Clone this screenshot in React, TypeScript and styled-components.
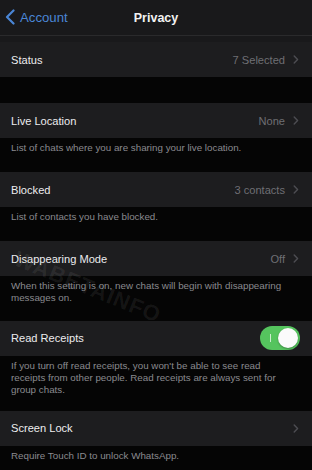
import React from "react"
import styled, { createGlobalStyle } from "styled-components"

const GlobalStyle = createGlobalStyle`
  html, body {
    margin: 0;
    padding: 0;
    background: #000;
  }
  body {
    font-family: "Liberation Sans", Arial, sans-serif;
    -webkit-font-smoothing: antialiased;
  }
`

const Screen = styled.div`
  position: relative;
  width: 312px;
  height: 470px;
  overflow: hidden;
  background: #050505;
  color: #e6e6e8;
`

const NavBar = styled.header`
  display: grid;
  grid-template-columns: 1fr auto 1fr;
  align-items: center;
  height: 35px;
  background: #19191b;
  border-bottom: 1px solid #2a2a2c;
  padding: 0 5px;
`

const BackButton = styled.div`
  display: flex;
  align-items: center;
  gap: 5px;
  color: #4a86d6;
  font-size: 13.2px;
  margin-top: -1px;
`

const Title = styled.h1`
  margin: 0;
  font-size: 12.5px;
  font-weight: 700;
  color: #f2f2f2;
`

const TopGap = styled.div`
  height: 6px;
  background: #19191b;
`

const Row = styled.div`
  display: flex;
  align-items: center;
  height: 35px;
  padding: 0 13px 0 11px;
  background: #1d1d1f;
`

const Label = styled.span`
  flex: 1;
  font-size: 11.1px;
  color: #ececee;
`

const Value = styled.span`
  font-size: 11.1px;
  color: #6f6f74;
  margin-right: 8px;
`

const Footer = styled.div<{ $lines?: number }>`
  padding: 4px 22px 0 11px;
  height: ${(p) => 30 + ((p.$lines ?? 1) - 1) * 10.5}px;
  font-size: 9.8px;
  line-height: 12px;
  color: #8a8a8f;
`

const SectionGap = styled.div`
  height: 26px;
`

const Toggle = styled.div`
  position: relative;
  width: 40px;
  height: 24px;
  border-radius: 12px;
  background: #55c45e;
  margin-right: -1px;

  &::before {
    content: "";
    position: absolute;
    left: 10px;
    top: 8px;
    width: 1px;
    height: 8px;
    background: rgba(255, 255, 255, 0.7);
  }

  &::after {
    content: "";
    position: absolute;
    right: 2px;
    top: 2px;
    width: 20px;
    height: 20px;
    border-radius: 50%;
    background: #fbfbfb;
    box-shadow: 0 1px 2px rgba(0, 0, 0, 0.3);
  }
`

const Watermark = styled.div`
  position: absolute;
  left: 20px;
  top: 246px;
  font-size: 22px;
  font-weight: 700;
  letter-spacing: 1px;
  color: rgba(255, 255, 255, 0.07);
  transform: rotate(22deg);
  transform-origin: left top;
  pointer-events: none;
`

const BackChevron = () => (
  <svg width="10" height="16" viewBox="0 0 10 16" fill="none">
    <path d="M8.5 1.5L2 8l6.5 6.5" stroke="#4a86d6" strokeWidth="2.2" strokeLinecap="round" strokeLinejoin="round" />
  </svg>
)

const Chevron = () => (
  <svg width="6" height="9" viewBox="0 0 6 9" fill="none">
    <path d="M1.2 1L4.6 4.5L1.2 8" stroke="#4d4d52" strokeWidth="1.4" strokeLinecap="round" strokeLinejoin="round" />
  </svg>
)

type Setting = {
  label: string
  value?: string
  toggle?: boolean
  footer?: string
  lines?: number
}

const settings: Setting[] = [
  { label: "Live Location", value: "None", footer: "List of chats where you are sharing your live location.", lines: 1 },
  { label: "Blocked", value: "3 contacts", footer: "List of contacts you have blocked.", lines: 1 },
  {
    label: "Disappearing Mode",
    value: "Off",
    footer: "When this setting is on, new chats will begin with disappearing messages on.",
    lines: 2,
  },
  {
    label: "Read Receipts",
    toggle: true,
    footer:
      "If you turn off read receipts, you won't be able to see read receipts from other people. Read receipts are always sent for group chats.",
    lines: 3,
  },
  { label: "Screen Lock", value: "", footer: "Require Touch ID to unlock WhatsApp.", lines: 1 },
]

export default function App(): JSX.Element {
  return (
    <Screen>
      <GlobalStyle />
      <NavBar>
        <BackButton>
          <BackChevron />
          <span>Account</span>
        </BackButton>
        <Title>Privacy</Title>
        <div />
      </NavBar>
      <TopGap />

      <Row>
        <Label>Status</Label>
        <Value>7 Selected</Value>
        <Chevron />
      </Row>
      <SectionGap />

      {settings.map((item, index) => (
        <div key={index}>
          <Row>
            <Label>{item.label}</Label>
            {item.toggle ? (
              <Toggle />
            ) : (
              <>
                {item.value && <Value>{item.value}</Value>}
                <Chevron />
              </>
            )}
          </Row>
          <Footer $lines={item.lines}>{item.footer}</Footer>
        </div>
      ))}

      <Watermark>WABETAINFO</Watermark>
    </Screen>
  )
}
